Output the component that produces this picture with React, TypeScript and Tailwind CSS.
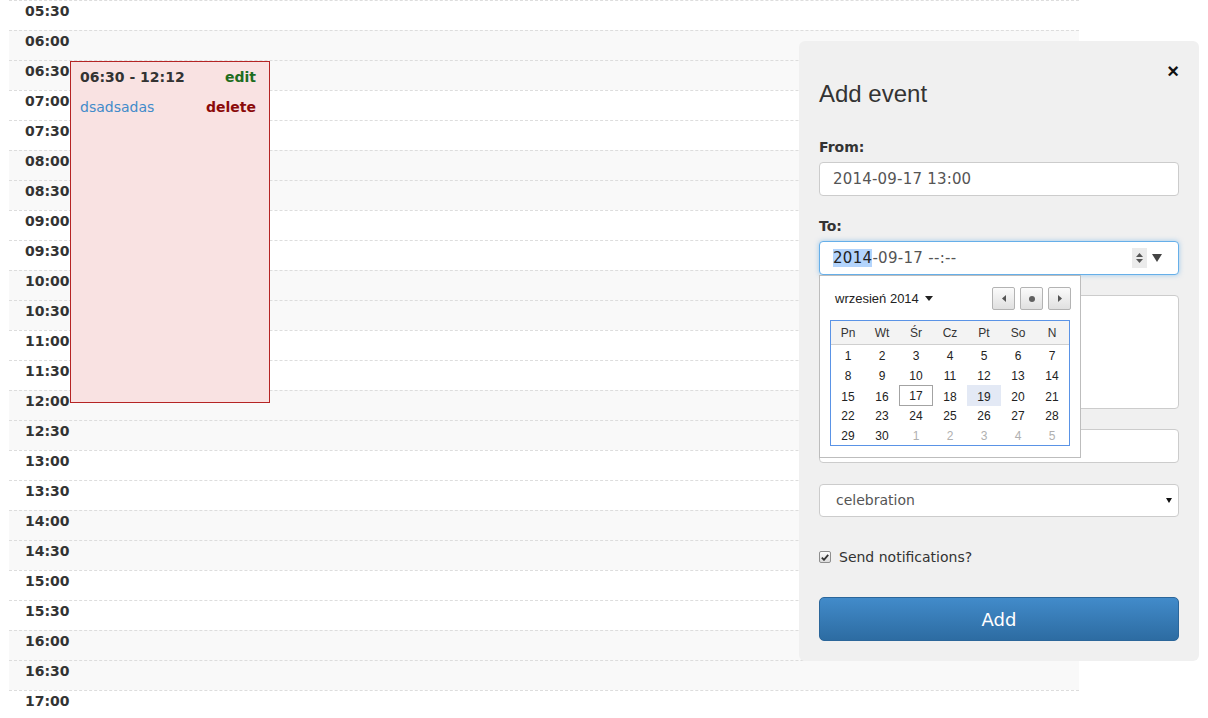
import React from "react";

const times: { label: string; shaded: boolean }[] = [];
for (let m = 5 * 60 + 30; m <= 17 * 60; m += 30) {
  const h = Math.floor(m / 60);
  const mm = m % 60;
  times.push({
    label: `${String(h).padStart(2, "0")}:${String(mm).padStart(2, "0")}`,
    shaded: h % 2 === 0,
  });
}

const weeks: { d: number; muted?: boolean }[][] = [
  [1, 2, 3, 4, 5, 6, 7].map((d) => ({ d })),
  [8, 9, 10, 11, 12, 13, 14].map((d) => ({ d })),
  [15, 16, 17, 18, 19, 20, 21].map((d) => ({ d })),
  [22, 23, 24, 25, 26, 27, 28].map((d) => ({ d })),
  [{ d: 29 }, { d: 30 }, { d: 1, muted: true }, { d: 2, muted: true }, { d: 3, muted: true }, { d: 4, muted: true }, { d: 5, muted: true }],
];

const dayNames = ["Pn", "Wt", "Śr", "Cz", "Pt", "So", "N"];

// small arrow buttons of the date picker
const NavButton = ({ children }: { children: React.ReactNode }) => (
  <div className="flex h-[23px] w-[23px] items-center justify-center rounded-[2px] border border-[#b3b3b3] bg-linear-to-b from-[#fbfbfb] to-[#e0e0e0]">
    {children}
  </div>
);

const DatePicker = () => (
  <div className="absolute left-0 top-full z-10 h-[183px] w-[262px] border border-[#bdbdbd] bg-white font-['Liberation_Sans',Arial,sans-serif]">
    <div className="flex h-[23px] items-center justify-between pl-[15px] pr-[9px] mt-[11px]">
      <div className="flex items-center text-[13px] text-[#222]">
        wrzesień 2014
        <svg width="8" height="5" viewBox="0 0 8 5" className="ml-[6px]">
          <path d="M0 0 L8 0 L4 5 Z" fill="#222" />
        </svg>
      </div>
      <div className="flex gap-[5px]">
        <NavButton>
          <svg width="4" height="7" viewBox="0 0 4 7">
            <path d="M4 0 L0 3.5 L4 7 Z" fill="#555" />
          </svg>
        </NavButton>
        <NavButton>
          <div className="h-[6px] w-[6px] rounded-full bg-[#606060]" />
        </NavButton>
        <NavButton>
          <svg width="4" height="7" viewBox="0 0 4 7">
            <path d="M0 0 L4 3.5 L0 7 Z" fill="#555" />
          </svg>
        </NavButton>
      </div>
    </div>
    <div className="ml-[10px] mt-[10px] w-[240px] border border-[#5a93e6]">
      <div className="grid h-[24px] grid-cols-7 items-center border-b border-[#cfcfcf] bg-[#f3f3f3] pt-px text-[12px] text-[#333]">
        {dayNames.map((n) => (
          <div key={n} className="text-center">
            {n}
          </div>
        ))}
      </div>
      {weeks.map((w, i) => (
        <div key={i} className="grid h-[20px] grid-cols-7 text-[12px]">
          {w.map((c, j) => {
            const today = i === 2 && j === 2;
            const sel = i === 2 && j === 4;
            return (
              <div
                key={j}
                className={
                  "flex items-center justify-center pt-[2px] " +
                  (c.muted ? "text-[#b0b0b0] " : "text-[#222] ") +
                  (today ? "border border-[#a3a3a3] pt-px " : "") +
                  (sel ? "bg-[#e3e9f5] " : "")
                }
              >
                {c.d}
              </div>
            );
          })}
        </div>
      ))}
    </div>
  </div>
);

const AddEventPanel = () => (
  <div className="absolute left-[799px] top-[41px] h-[620px] w-[400px] rounded-md bg-[#f0f0f0] px-5 pt-5 text-[#333]">
    <div className="flex h-5 justify-end">
      <span className="font-['Liberation_Sans',Arial,sans-serif] text-[20px] font-bold leading-5 text-[#111]">×</span>
    </div>
    <h3 className="font-['Liberation_Sans',Arial,sans-serif] text-[24px] leading-[26px] text-[#333]">Add event</h3>

    <div className="mt-[30px] h-5 text-[14px] font-bold leading-5">From:</div>
    <div className="mt-[5px] flex h-[34px] items-center rounded-[4px] border border-[#ccc] bg-white px-[13px] text-[15px] tracking-[0.2px] text-[#555]">
      2014-09-17 13:00
    </div>

    <div className="mt-5 h-5 text-[14px] font-bold leading-5">To:</div>
    <div className="relative mt-[5px]">
      <div className="flex h-[34px] items-center rounded-[4px] border border-[#66afe9] bg-white pl-[13px] pr-[16px] text-[15px] tracking-[0.3px] text-[#555] shadow-[0_0_5px_rgba(102,175,233,0.6)]">
        <span className="bg-[#b3d4fc] leading-[18px] text-[#222]">2014</span>
        <span>-09-17 --:--</span>
        <div className="ml-auto flex h-5 w-[15px] flex-col items-center justify-center gap-[2px] bg-[#ebebeb]">
          <svg width="7" height="4" viewBox="0 0 7 4">
            <path d="M0 4 L3.5 0 L7 4 Z" fill="#555" />
          </svg>
          <svg width="7" height="4" viewBox="0 0 7 4">
            <path d="M0 0 L7 0 L3.5 4 Z" fill="#555" />
          </svg>
        </div>
        <svg width="10" height="8" viewBox="0 0 10 8" className="ml-[5px]">
          <path d="M0 0 L10 0 L5 8 Z" fill="#444" />
        </svg>
      </div>
      <DatePicker />
    </div>

    <div className="mt-5 h-[114px] rounded-[4px] border border-[#ccc] bg-white" />
    <div className="mt-5 h-[34px] rounded-[4px] border border-[#ccc] bg-white" />
    <div className="mt-[21px] flex h-[33px] items-center justify-between rounded-[4px] border border-[#ccc] bg-white pl-4 pr-[6px] text-[14px] text-[#555]">
      <span>celebration</span>
      <svg width="6" height="5" viewBox="0 0 6 5">
        <path d="M0 0 L6 0 L3 5 Z" fill="#111" />
      </svg>
    </div>

    <div className="mt-[30px] flex h-5 items-center">
      <div className="flex h-[12px] w-[12px] items-center justify-center rounded-[2px] border border-[#8e8e8e] bg-linear-to-b from-[#fcfcfc] to-[#dcdcdc]">
        <svg width="8" height="7" viewBox="0 0 8 7">
          <path d="M0.8 3.6 L3 5.8 L7.2 0.9" stroke="#333" strokeWidth="1.8" fill="none" />
        </svg>
      </div>
      <span className="ml-2 text-[14px] text-[#333]">Send notifications?</span>
    </div>

    <div className="mt-[30px] flex h-[44px] items-center justify-center rounded-[5px] border border-[#2b669a] bg-linear-to-b from-[#428bca] to-[#2d6ca2] text-[18px] text-white">
      Add
    </div>
  </div>
);

export default function App() {
  return (
    <div className="relative h-[718px] w-[1208px] overflow-hidden bg-white font-['DejaVu_Sans',Verdana,sans-serif]">
      <div className="ml-[9px] w-[1070px]">
        {times.map((t) => (
          <div
            key={t.label}
            className={"h-[30px] border-t border-dashed border-[#ddd] " + (t.shaded ? "bg-[#f9f9f9]" : "bg-white")}
          >
            <div className="pl-4 pt-[2px] text-[14px] font-bold leading-4 text-[#333]">{t.label}</div>
          </div>
        ))}
      </div>

      {/* event block on the day grid */}
      <div className="absolute left-[70px] top-[61px] h-[342px] w-[200px] border border-[#b52424] bg-[#f9e2e2] px-[13px] pl-[9px] pt-[7px] text-[14px]">
        <div className="flex h-4 items-center justify-between leading-4">
          <span className="font-bold text-[#333]">06:30 - 12:12</span>
          <span className="font-bold text-[#1f6d1f]">edit</span>
        </div>
        <div className="mt-[14px] flex h-4 items-center justify-between leading-4">
          <span className="text-[#428bca]">dsadsadas</span>
          <span className="font-bold text-[#8b0a0a]">delete</span>
        </div>
      </div>

      <AddEventPanel />
    </div>
  );
}
